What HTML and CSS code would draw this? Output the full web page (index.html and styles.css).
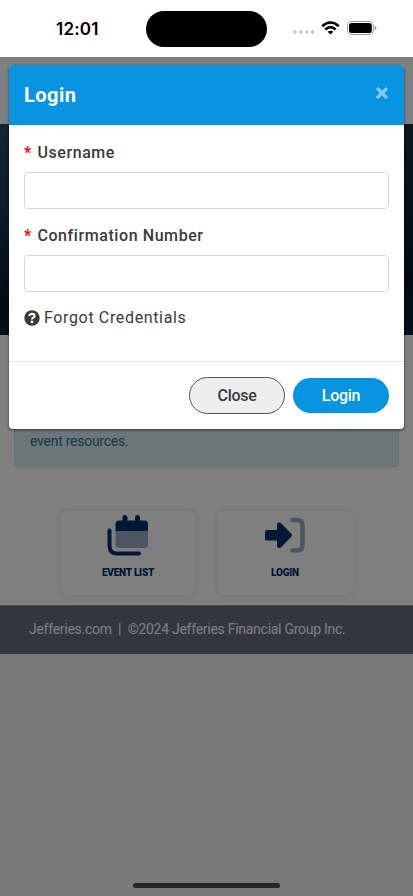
FILE: index.html
```
<!DOCTYPE html>
<html lang="en">
<head>
<meta charset="utf-8">
<meta name="viewport" content="width=device-width, initial-scale=1">
<title>Login</title>
<link rel="stylesheet" href="styles.css">
</head>
<body>
<header class="status">
  <span class="time">12:01</span>
  <span class="island"></span>
  <div class="indicators">
    <svg class="dots" width="22" height="4" viewBox="0 0 22 4" fill="#ccc"><circle cx="2" cy="2" r="1.9"/><circle cx="7.9" cy="2" r="1.9"/><circle cx="13.8" cy="2" r="1.9"/><circle cx="19.7" cy="2" r="1.9"/></svg>
    <svg width="19" height="14" viewBox="0 0 19 14" fill="none" stroke="#000" stroke-width="2.5"><path d="M1.2 5.2Q9.5-2.3 17.8 5.2M4.3 8.5Q9.5 3.8 14.7 8.5"/><path d="M6.6 10.8Q9.5 8.5 12.4 10.8L9.5 13.6Z" fill="#000" stroke="none"/></svg>
    <svg width="30" height="14" viewBox="0 0 30 14"><rect x=".5" y=".5" width="25.8" height="13" rx="4.2" fill="none" stroke="#999"/><rect x="2" y="2" width="22.8" height="10" rx="2.8"/><path d="M27.7 4.8Q29.5 5.3 29.5 7T27.7 9.2Z" fill="#999"/></svg>
  </div>
</header>
<main class="page">
  <div class="topbar"></div>
  <div class="hero"></div>
  <section class="content">
    <div class="alert">Please login using your portal access for<br>event resources.</div>
    <nav class="tiles">
      <a class="tile">
        <svg width="42" height="42" viewBox="0 0 42 42"><path d="M2.500 15.500V31Q2.500 38.500 10 38.500H32" fill="none" stroke="#003068" stroke-width="4" stroke-linecap="round"/><path d="M8.500 15H41V29.500Q41 33 37.500 33H12Q8.500 33 8.500 29.500Z" fill="#99abc3"/><path d="M8.500 16V9Q8.500 5.500 12 5.500H15.500V2.500A2.500 2.500 0 0 1 20.500 2.500V5.500H28V2.500A2.500 2.500 0 0 1 33 2.500V5.500H37.500Q41 5.500 41 9V16Z" fill="#003068"/></svg>
        <span>EVENT LIST</span>
      </a>
      <a class="tile">
        <svg width="42" height="42" viewBox="0 0 42 42"><path d="M28.500 5H33Q38.500 5 38.500 10.500V30Q38.500 35.500 33 35.500H28.500" fill="none" stroke="#99abc3" stroke-width="4.600" stroke-linecap="round"/><path d="M3 15H13V9.500Q13 7.500 15 7.500Q16.300 7.500 17.300 8.500L27.500 19Q28.700 20.300 27.500 21.600L17.300 32Q16.300 33 15 33Q13 33 13 31V25.500H3Q1 25.500 1 23.500V17Q1 15 3 15Z" fill="#003068"/></svg>
        <span>LOGIN</span>
      </a>
    </nav>
  </section>
  <footer class="footer">Jefferies.com&nbsp; |&nbsp; ©2024 Jefferies Financial Group Inc.</footer>
  <div class="overlay">
    <form class="modal">
      <div class="modal-head"><h1>Login</h1><svg class="x" width="12" height="12" viewBox="0 0 12 12"><path d="M2 2L10 10M10 2L2 10" stroke="#82caf0" stroke-width="3.300" stroke-linecap="round"/></svg></div>
      <div class="modal-body">
        <label for="user"><b>*</b> Username</label>
        <input id="user" type="text">
        <label for="confirmation"><b>*</b> Confirmation Number</label>
        <input id="confirmation" type="text">
        <a class="forgot"><svg width="16" height="16" viewBox="0 0 16 16"><circle cx="8" cy="8" r="7.700" fill="#3a3a3c"/><path d="M5.300 6Q6 3.900 8.100 3.900Q10.500 3.900 10.500 6Q10.500 7 9.300 7.700Q8 8.300 8 9.400" fill="none" stroke="#fff" stroke-width="2.100"/><circle cx="8" cy="11.900" r="1.350" fill="#fff"/></svg>Forgot Credentials</a>
      </div>
      <div class="modal-foot"><button type="button" class="close">Close</button><button type="button" class="login">Login</button></div>
    </form>
  </div>
  <div class="home"></div>
</main>
</body>
</html>
```
FILE: styles.css
```
* { box-sizing: border-box; }
body { margin: 0; height: 896px; overflow: hidden; background: #fff; font-family: Roboto, sans-serif; }
svg { display: block; }
.status { height: 57px; display: grid; grid-template-columns: 146px 121px 146px; align-items: center; }
.time { padding-left: 56px; font: 600 17px/22px Inter, sans-serif; letter-spacing: .2px; }
.island { height: 36px; border-radius: 18px; background: #000; }
.indicators { display: flex; align-items: center; gap: 6.500px; padding-left: 25.500px; height: 36px; padding-bottom: 2px; }
.dots { margin-top: 9px; }
.page { position: relative; height: 839px; background: #f2f2f2; }
.topbar { height: 67px; background: #fff; }
.hero { height: 211px; background: linear-gradient(90deg, transparent 60%, rgba(0, 16, 32, .4)), linear-gradient(175deg, #234c64, #14364c 38%, #061624 75%, #0d2e46); }
.content { height: 270px; padding: 29px 14px 0; background: #fff; }
.alert { height: 103px; padding: 46px 15px 0; border: 1px solid #bce8f1; border-radius: 4px; background: #d9edf7; color: #31708f; font-size: 14px; line-height: 20px; letter-spacing: -.26px; }
.tiles { display: flex; justify-content: center; gap: 21px; margin-top: 44px; }
.tile { width: 136px; height: 84px; padding-top: 4px; display: flex; flex-direction: column; align-items: center; border-radius: 7px; box-shadow: 0 0 7px rgba(0, 0, 0, .13); color: #003068; font-size: 10px; font-weight: 900; line-height: 14px; letter-spacing: -.2px; }
.tile span { margin-top: 9px; }
.footer { height: 49px; padding-left: 29px; background: #666a7e; border-top: 1px solid #999; color: #fff; font-size: 14px; line-height: 47px; letter-spacing: -.27px; white-space: nowrap; }
.overlay { position: absolute; inset: 0; padding: 8px 9px; background: rgba(0, 0, 0, .5); }
.modal { height: 364px; border-radius: 4px; overflow: hidden; background: #fff; box-shadow: 0 1px 3px rgba(0, 0, 0, .6); color: #3a3a3c; }
.modal-head { height: 60px; display: flex; justify-content: space-between; padding: 0 16px 0 15px; background: #0693e0; color: #fff; }
h1 { margin: 0; font-size: 20px; font-weight: 700; line-height: 61px; letter-spacing: .5px; }
.x { margin-top: 22px; }
.modal-body { height: 237px; padding: 17px 15px 0; border-bottom: 1px solid #e2e2e2; }
label { display: block; height: 30px; font-size: 16px; font-weight: 500; line-height: 21px; letter-spacing: .58px; }
label b { margin-right: 1px; color: #f00; }
input { display: block; width: 365px; height: 37px; margin: 0 0 16px; border: 1px solid #d3d8de; border-radius: 4px; background: #fff; }
.forgot { display: flex; align-items: center; gap: 4px; height: 19px; font-size: 16px; letter-spacing: .64px; }
.modal-foot { display: flex; justify-content: flex-end; align-items: center; gap: 8px; height: 67px; padding: 0 15px; }
button { width: 96px; height: 35px; padding: 0 0 1px; border: 0; border-radius: 18px; font: 500 16px Roboto, sans-serif; letter-spacing: -.3px; }
.close { height: 37px; border: 1px solid #555; border-radius: 19px; background: #eee; color: #3a3a3c; }
.login { background: #0693e0; color: #fff; }
.home { position: absolute; bottom: 8px; left: 133px; width: 147px; height: 5px; border-radius: 3px; background: #272727; }
```
